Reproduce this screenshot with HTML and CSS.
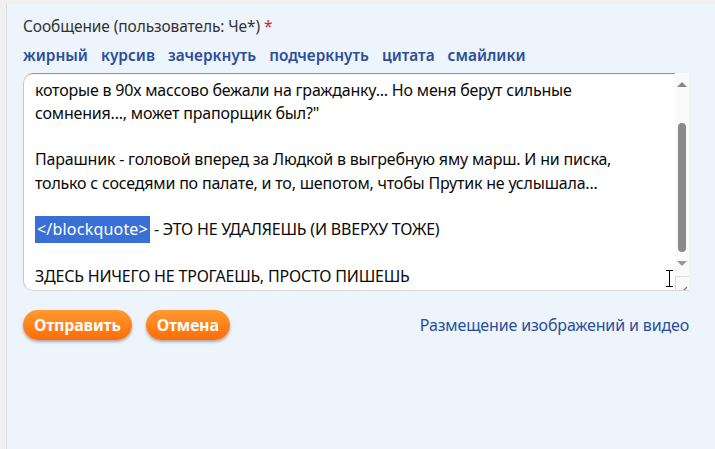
FILE: index.html
```html
<!DOCTYPE html>
<html lang="ru">
<head>
<meta charset="utf-8">
<link rel="stylesheet" href="styles.css">
</head>
<body>
<div class="panel">
  <div class="label">Сообщение (пользователь: Че*) <span class="req">*</span></div>
  <div class="tools">
    <a>жирный</a><a>курсив</a><a>зачеркнуть</a><a>подчеркнуть</a><a>цитата</a><a>смайлики</a>
  </div>
  <div class="editor">
    <div class="text">
      <div class="content">
        <p>которые в 90х массово бежали на гражданку... Но меня берут сильные</p>
        <p>сомнения..., может прапорщик был?"</p>
        <p>&nbsp;</p>
        <p>Парашник - головой вперед за Людкой в выгребную яму марш. И ни писка,</p>
        <p>только с соседями по палате, и то, шепотом, чтобы Прутик не услышала...</p>
        <p>&nbsp;</p>
        <p><span class="sel">&lt;/blockquote&gt;</span> - ЭТО НЕ УДАЛЯЕШЬ (И ВВЕРХУ ТОЖЕ)</p>
        <p>&nbsp;</p>
        <p>ЗДЕСЬ НИЧЕГО НЕ ТРОГАЕШЬ, ПРОСТО ПИШЕШЬ</p>
      </div>
    </div>
    <div class="scrollbar">
      <div class="arrow up"></div>
      <div class="track"><div class="thumb"></div></div>
      <div class="arrow down"></div>
      <div class="grip">
        <svg width="14" height="13" viewBox="0 0 14 13"><path d="M6 11 L11 6 M9 11 L11 9" stroke="#777" stroke-width="1.2"/></svg>
      </div>
    </div>
    <svg class="ibeam" width="9" height="17" viewBox="0 0 9 17"><path d="M1 0.5 H8 M1 16.5 H8 M4.5 0.5 V16.5" stroke="#000" stroke-width="1" fill="none"/></svg>
  </div>
  <div class="actions">
    <button class="btn">Отправить</button>
    <button class="btn">Отмена</button>
    <a class="media">Размещение изображений и видео</a>
  </div>
</div>
</body>
</html>
```
FILE: styles.css
```css
html, body {
  margin: 0;
  padding: 0;
}
body {
  background: #f0f0f0;
  width: 715px;
  height: 449px;
  overflow: hidden;
  font-family: "Noto Sans", "Open Sans", sans-serif;
}
.panel {
  margin: 4px 0 0 6px;
  height: 445px;
  background: #edf4fb;
  border-left: 1px solid #d8dde2;
  padding: 12px 26px 0 16px;
  box-sizing: border-box;
}
.label {
  font-size: 15.5px;
  color: #333;
  line-height: 20px;
  letter-spacing: -0.1px;
}
.req {
  color: #e02020;
}
.tools {
  display: flex;
  gap: 13px;
  margin-top: 10px;
  line-height: 20px;
}
.tools a {
  font-size: 15.4px;
  font-weight: 600;
  color: #2b4d9c;
  letter-spacing: 0;
}
.editor {
  position: relative;
  display: flex;
  margin-top: 7px;
  height: 217px;
  background: #fff;
  border-radius: 10px 0 0 10px;
  border-left: 1px solid #c9c9c9;
  border-bottom: 1px solid #d7d7d7;
  box-shadow: inset 0 2px 1px -1px #8c8c8c;
  overflow: hidden;
}
.text {
  flex: 1;
  overflow: hidden;
  padding-left: 11px;
}
.content {
  padding-top: 5.5px;
}
.content p {
  margin: 0;
  font-size: 16px;
  line-height: 23.3px;
  color: #0a0a0a;
  white-space: nowrap;
  letter-spacing: -0.2px;
}
.sel {
  background: #3a70d6;
  color: #fff;
  padding: 2px 2px 3px;
  letter-spacing: 0.2px;
}
.scrollbar {
  width: 14px;
  background: #fafafa;
  display: flex;
  flex-direction: column;
  align-items: center;
}
.arrow {
  width: 0;
  height: 0;
  border-left: 5px solid transparent;
  border-right: 5px solid transparent;
}
.arrow.up {
  margin-top: 9px;
  border-bottom: 5px solid #888;
}
.arrow.down {
  margin-top: 9px;
  border-top: 5px solid #999;
}
.track {
  height: 129px;
  margin-top: 36px;
  display: flex;
  justify-content: center;
}
.thumb {
  width: 8px;
  height: 100%;
  background: #8a8a8a;
  border-radius: 4px;
}
.grip {
  margin-top: auto;
  width: 14px;
  height: 13px;
  border-left: 1px solid #ddd;
  border-top: 1px solid #ddd;
  background: #fafafa;
}
.ibeam {
  position: absolute;
  left: 641px;
  top: 197px;
}
.actions {
  display: flex;
  align-items: center;
  margin-top: 19px;
}
.btn {
  font-family: "Noto Sans", "Open Sans", sans-serif;
  font-size: 16px;
  font-weight: 700;
  color: #fff;
  border: none;
  height: 30px;
  padding: 0 11px;
  border-radius: 15px;
  background: linear-gradient(#ff9a30, #ff6c08);
  box-shadow: 0 2px 3px rgba(80, 80, 80, 0.45);
  margin-right: 14px;
  letter-spacing: -0.2px;
}
.media {
  margin-left: auto;
  font-size: 16px;
  color: #2b4d9c;
  letter-spacing: -0.15px;
}
```
